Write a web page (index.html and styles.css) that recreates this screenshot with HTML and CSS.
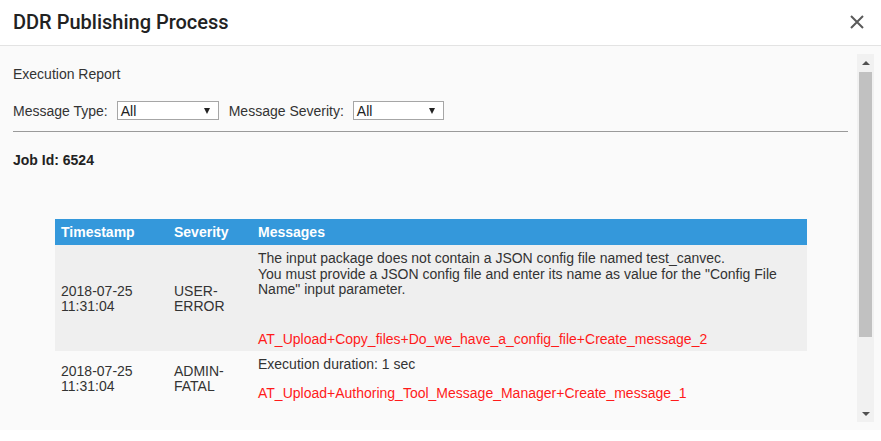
FILE: index.html
```html
<!DOCTYPE html>
<html>
<head>
<meta charset="utf-8">
<link rel="stylesheet" href="styles.css">
</head>
<body>
<div class="dialog">
  <header class="dialog-header">
    <h1 class="dialog-title">DDR Publishing Process</h1>
    <button class="close-btn" aria-label="Close">
      <svg width="16" height="16" viewBox="0 0 16 16"><path d="M2 2 L14 14 M14 2 L2 14" stroke="#5a5a5a" stroke-width="2" fill="none"/></svg>
    </button>
  </header>
  <div class="dialog-body">
    <div class="content">
      <div class="report-title">Execution Report</div>
      <div class="filters">
        <span class="filter-label">Message Type:</span>
        <div class="select select-type"><span>All</span><i class="caret"></i></div>
        <span class="filter-label">Message Severity:</span>
        <div class="select select-sev"><span>All</span><i class="caret"></i></div>
      </div>
      <div class="divider"></div>
      <div class="job-id">Job Id: 6524</div>
      <table class="report-table">
        <thead>
          <tr><th class="col-time">Timestamp</th><th class="col-sev">Severity</th><th>Messages</th></tr>
        </thead>
        <tbody>
          <tr class="row-alt">
            <td>2018-07-25<br>11:31:04</td>
            <td>USER-<br>ERROR</td>
            <td class="msg">
              <div class="msg-text msg-long">The input package does not contain a JSON config file named test_canvec.<br>You must provide a JSON config file and enter its name as value for the "Config File Name" input parameter.</div>
              <div class="msg-src">AT_Upload+Copy_files+Do_we_have_a_config_file+Create_message_2</div>
            </td>
          </tr>
          <tr class="row-last">
            <td>2018-07-25<br>11:31:04</td>
            <td>ADMIN-<br>FATAL</td>
            <td class="msg">
              <div class="msg-text">Execution duration: 1 sec</div>
              <div class="msg-src">AT_Upload+Authoring_Tool_Message_Manager+Create_message_1</div>
            </td>
          </tr>
        </tbody>
      </table>
    </div>
    <div class="scrollbar">
      <div class="sb-btn"><i class="sb-up"></i></div>
      <div class="sb-thumb"></div>
      <div class="sb-rest"></div>
      <div class="sb-btn"><i class="sb-down"></i></div>
    </div>
  </div>
</div>
</body>
</html>
```

FILE: styles.css
```css
html, body {
  margin: 0;
  padding: 0;
  background: #ffffff;
}
.dialog {
  width: 881px;
  height: 441px;
  font-family: "Liberation Sans", Arial, sans-serif;
  color: #333333;
}
.dialog-header {
  border-bottom: 1px solid #e3e3e3;
  display: flex;
  align-items: center;
  justify-content: space-between;
  padding: 0 16px 0 13px;
  box-sizing: border-box;
  height: 46px;
}
.dialog-title {
  margin: 0;
  font-family: Roboto, "Noto Sans", sans-serif;
  font-weight: 500;
  font-size: 20px;
  color: #222222;
  padding-bottom: 2px;
}
.close-btn {
  border: 0;
  background: transparent;
  padding: 0;
  width: 16px;
  height: 16px;
  display: flex;
  margin-bottom: 2px;
}
.dialog-body {
  height: 384px;
  background: #fafafa;
  display: flex;
}
.content {
  flex: 1;
  overflow: hidden;
  padding: 20px 9px 0 13px;
  font-size: 14px;
}
.report-title {
  line-height: 16px;
}
.filters {
  display: flex;
  align-items: center;
  margin-top: 19px;
  height: 19px;
}
.filter-label {
  margin-right: 9px;
}
.select {
  height: 19px;
  box-sizing: border-box;
  border: 1px solid #a6a6a6;
  background: #ffffff;
  display: flex;
  align-items: center;
  justify-content: space-between;
  padding: 0 8px 0 3px;
  margin-right: 10px;
  color: #222;
}
.select-type { width: 102px; }
.select-sev { width: 91px; }
.caret {
  width: 0;
  height: 0;
  border-left: 3.5px solid transparent;
  border-right: 3.5px solid transparent;
  border-top: 6px solid #222;
}
.divider {
  margin-top: 11px;
  height: 1px;
  background: #9a9a9a;
}
.job-id {
  margin-top: 20px;
  line-height: 16px;
  font-weight: bold;
  color: #222;
}
.report-table {
  margin-top: 51px;
  margin-left: 42px;
  width: 752px;
  border-collapse: collapse;
  font-size: 14px;
}
.report-table th {
  background: #3498db;
  color: #ffffff;
  font-weight: bold;
  text-align: left;
  height: 26px;
  padding: 0 6px;
}
.col-time { width: 101px; }
.col-sev { width: 72px; }
.report-table td {
  vertical-align: middle;
  padding: 6px 6px 3px;
  line-height: 15.5px;
  color: #333;
}
.row-alt td { background: #efefef; }
.row-last td { padding-bottom: 7px; }
.report-table td.msg { vertical-align: top; }
.msg-text { margin-bottom: 14px; }
.msg-long { margin-bottom: 34.75px; }
.msg-src { color: #ff1a1a; }
.scrollbar {
  width: 17px;
  margin: 8px 7px 8px 0;
  background: #f1f1f1;
  display: flex;
  flex-direction: column;
}
.sb-btn {
  height: 17px;
  display: flex;
  align-items: center;
  justify-content: center;
}
.sb-thumb {
  height: 265px;
  margin: 1px 2px 0 2px;
  background: #c1c1c1;
}
.sb-rest { flex: 1; }
.sb-up {
  width: 0; height: 0;
  border-left: 4px solid transparent;
  border-right: 4px solid transparent;
  border-bottom: 4px solid #505050;
}
.sb-down {
  width: 0; height: 0;
  border-left: 4px solid transparent;
  border-right: 4px solid transparent;
  border-top: 4px solid #505050;
}
```
